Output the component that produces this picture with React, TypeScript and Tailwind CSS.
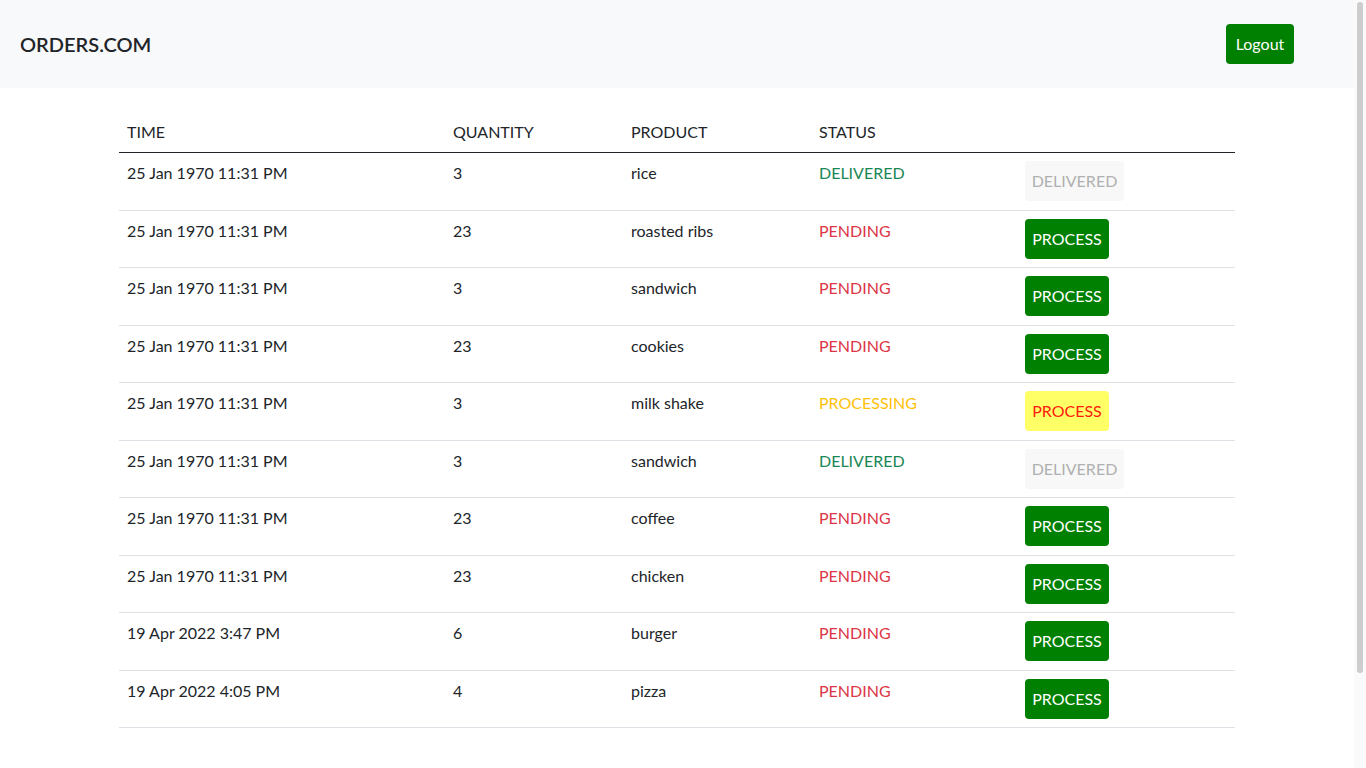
import React from 'react';

type Status = 'DELIVERED' | 'PENDING' | 'PROCESSING';

interface Order {
  time: string;
  quantity: number;
  product: string;
  status: Status;
}

const orders: Order[] = [
  { time: '25 Jan 1970 11:31 PM', quantity: 3, product: 'rice', status: 'DELIVERED' },
  { time: '25 Jan 1970 11:31 PM', quantity: 23, product: 'roasted ribs', status: 'PENDING' },
  { time: '25 Jan 1970 11:31 PM', quantity: 3, product: 'sandwich', status: 'PENDING' },
  { time: '25 Jan 1970 11:31 PM', quantity: 23, product: 'cookies', status: 'PENDING' },
  { time: '25 Jan 1970 11:31 PM', quantity: 3, product: 'milk shake', status: 'PROCESSING' },
  { time: '25 Jan 1970 11:31 PM', quantity: 3, product: 'sandwich', status: 'DELIVERED' },
  { time: '25 Jan 1970 11:31 PM', quantity: 23, product: 'coffee', status: 'PENDING' },
  { time: '25 Jan 1970 11:31 PM', quantity: 23, product: 'chicken', status: 'PENDING' },
  { time: '19 Apr 2022 3:47 PM', quantity: 6, product: 'burger', status: 'PENDING' },
  { time: '19 Apr 2022 4:05 PM', quantity: 4, product: 'pizza', status: 'PENDING' },
];

const statusColor: Record<Status, string> = {
  DELIVERED: 'text-[#198754]',
  PENDING: 'text-[#dc3545]',
  PROCESSING: 'text-[#ffc107]',
};

const ActionButton: React.FC<{ status: Status }> = ({ status }) => {
  if (status === 'DELIVERED') {
    return (
      <button
        disabled
        className="h-10 w-[99px] rounded bg-[#f8f8f8] text-[#b0b0b0] cursor-default"
      >
        DELIVERED
      </button>
    );
  }
  if (status === 'PROCESSING') {
    return (
      <button className="h-10 w-[84px] rounded bg-[#ffff66] text-[#ff1a0a]">PROCESS</button>
    );
  }
  return <button className="h-10 w-[84px] rounded bg-[#008000] text-white">PROCESS</button>;
};

export default function App() {
  return (
    <div
      className="h-[768px] flex bg-white text-[#212529] text-base overflow-hidden"
      style={{ fontFamily: 'Lato, "Noto Sans", sans-serif' }}
    >
      <div className="w-[1354px] shrink-0">
        <nav className="bg-[#f8f9fa] h-[88px] flex items-center justify-between pl-5 pr-[60px]">
          <span className="text-xl font-semibold">ORDERS.COM</span>
          <button className="h-10 w-[68px] rounded bg-[#008000] text-white">Logout</button>
        </nav>

        <div className="w-[1116px] mx-auto mt-6">
          <table className="w-full border-collapse text-left">
            <thead>
              <tr className="border-b border-[#212529]">
                <th className="font-normal px-2 py-2 leading-6 w-[326px]">TIME</th>
                <th className="font-normal px-2 py-2 leading-6 w-[178px]">QUANTITY</th>
                <th className="font-normal px-2 py-2 leading-6 w-[188px]">PRODUCT</th>
                <th className="font-normal px-2 py-2 leading-6 w-[206px]">STATUS</th>
                <th className="font-normal px-2 py-2 leading-6"></th>
              </tr>
            </thead>
            <tbody>
              {orders.map((order, i) => (
                <tr key={i} className="border-b border-[#dee2e6] h-[57.5px]">
                  <td className="px-2 py-2 leading-6 align-top">{order.time}</td>
                  <td className="px-2 py-2 leading-6 align-top">{order.quantity}</td>
                  <td className="px-2 py-2 leading-6 align-top">{order.product}</td>
                  <td className={`px-2 py-2 leading-6 align-top ${statusColor[order.status]}`}>
                    {order.status}
                  </td>
                  <td className="px-2 py-2 leading-6 align-top">
                    <ActionButton status={order.status} />
                  </td>
                </tr>
              ))}
            </tbody>
          </table>
        </div>
      </div>

      {/* scrollbar strip as seen in the screenshot */}
      <div className="flex-1 bg-[#fafafa] pt-[2px] pl-[3px]">
        <div className="w-[6px] h-[671px] rounded-sm bg-[#cdcdcd]"></div>
      </div>
    </div>
  );
}
